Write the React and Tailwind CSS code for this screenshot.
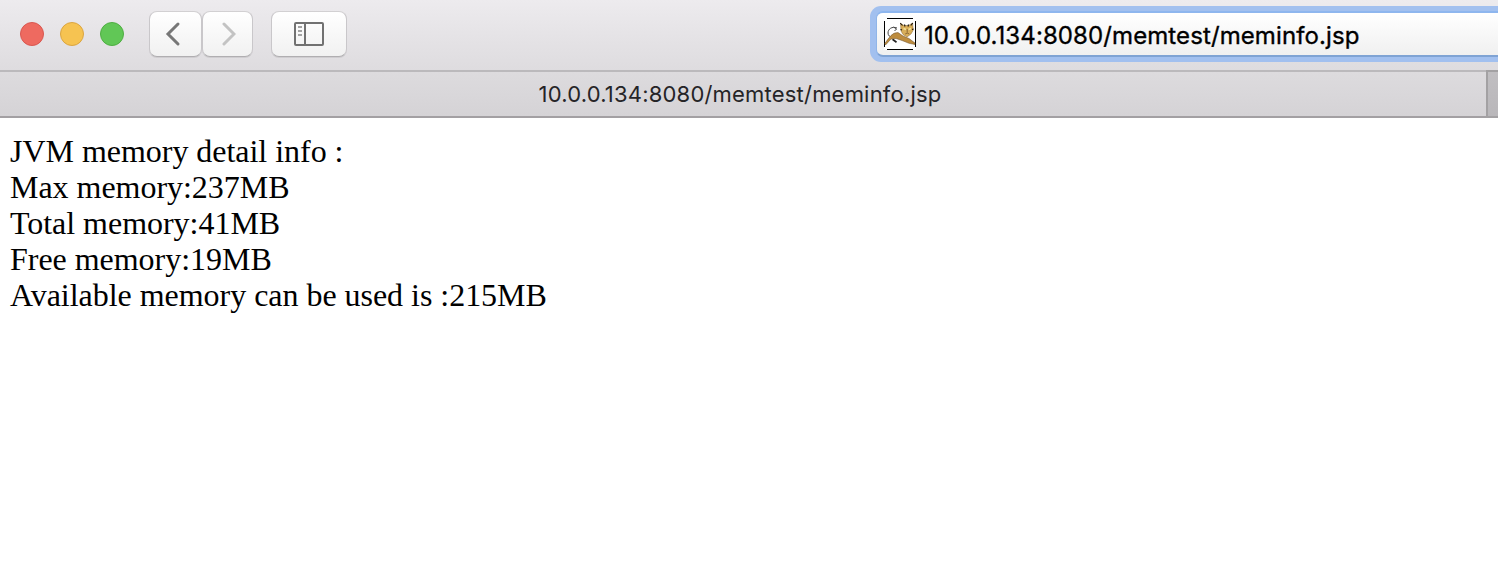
import React from "react";

const lines = [
  "JVM memory detail info :",
  "Max memory:237MB",
  "Total memory:41MB",
  "Free memory:19MB",
  "Available memory can be used is :215MB",
];

const url = "10.0.0.134:8080/memtest/meminfo.jsp";

const buttonClass =
  "flex h-[46px] items-center justify-center rounded-[8px] border border-t-[#d2d0d2] border-x-[#c9c7ca] border-b-[#b0aeb1] bg-linear-to-b from-white to-[#f1f1f1] shadow-[0_1px_0_#cfcdd0]";

function CatIcon() {
  return (
    <svg width="32" height="32" viewBox="0 0 32 32" className="shrink-0" aria-hidden="true">
      <rect width="32" height="32" rx="2" fill="#fff" />
      <path d="M3 .5H29M3 31.5H29M.5 3V29M31.5 3V29" stroke="#000" strokeWidth="1" />
      <path d="M13 10C8 8 4 11 4 15C4 17.5 6 19 8 19.5" fill="none" stroke="#444" strokeWidth="1" />
      <path d="M9.5 9L12.5 11L10.5 13" fill="none" stroke="#444" strokeWidth="1" />
      <path d="M9 20.5L13 23.5L12 25L8 22Z" fill="#222" />
      <path d="M.8 25.5L4 21L7 17.5Q9.5 14.5 14 14.5L19 18L25 20.5L31 25V26.5L25 25.3L18 22.5L12 20.5L7 21L1.5 27Z" fill="#bd8c3e" stroke="#6a4d25" strokeWidth=".5" />
      <path d="M16.5 5.5L20 7.5H24.5L28.5 5L29.3 12L27 16L23 19L19 16.5L17 13Z" fill="#d9ae59" stroke="#8a6937" strokeWidth=".5" />
      <path d="M16.2 5L18.5 7.5M20.5 6.5L21 8.5M24 8.5L24.5 6.5M26.8 7.5L28.8 5M16.5 11.5L18 12M28 11.5L29.5 11" stroke="#17120c" strokeWidth="1.1" />
      <path d="M19.5 10.5L22 11.5M24.5 11.5L27 10.5" stroke="#f3e49a" strokeWidth="1.5" />
      <path d="M23.2 11V14.5M21.2 16L23.2 15L25.2 16" fill="none" stroke="#76542a" strokeWidth=".8" />
    </svg>
  );
}

export default function App() {
  return (
    <div className="flex h-[562px] w-full flex-col overflow-hidden bg-white">
      <header className="flex h-[70px] shrink-0 bg-linear-to-b from-[#edebee] to-[#dedcdf]">
        <div className="flex w-[870px] shrink-0 items-start">
          <div className="ml-5 mt-[22px] flex gap-4">
            <span className="size-6 rounded-full border border-[#d95750] bg-[#ee6a60]" />
            <span className="size-6 rounded-full border border-[#dba541] bg-[#f6c351]" />
            <span className="size-6 rounded-full border border-[#4fae42] bg-[#61c756]" />
          </div>
          <div className="ml-[25px] mt-[11px] flex">
            <button aria-label="Back" className={`${buttonClass} w-[53px] pr-[5px]`}>
              <svg width="16" height="26" viewBox="0 0 16 26" fill="none" stroke="#777" strokeWidth="3" strokeLinecap="round">
                <path d="M13 3L3 13L13 23" />
              </svg>
            </button>
            <button aria-label="Forward" className={`${buttonClass} w-[51px]`}>
              <svg width="16" height="26" viewBox="0 0 16 26" fill="none" stroke="#c3c3c3" strokeWidth="3" strokeLinecap="round">
                <path d="M4 3L14 13L4 23" />
              </svg>
            </button>
          </div>
          <button aria-label="Sidebar" className={`${buttonClass} ml-[18px] mt-[11px] w-[76px]`}>
            <svg width="30" height="24" viewBox="0 0 30 24" fill="none">
              <rect x="1" y="1" width="28" height="22" rx="1" stroke="#717171" strokeWidth="2" />
              <path d="M11 1V23" stroke="#717171" strokeWidth="2" />
              <path d="M4 5H8M4 9H8M4 13H8" stroke="#a2a2a2" strokeWidth="2" />
            </svg>
          </button>
        </div>
        <div className="mt-[6px] h-[56px] flex-1 rounded-l-[11px] bg-[#a2c0ef] pb-[5px] pl-[6px] pt-[5px]">
          <div className="flex h-[46px] items-center overflow-hidden rounded-l-[7px] border-y-2 border-l border-b-[#7fa3d4] border-l-[#90b5e8] border-t-[#8eb6ee] bg-linear-to-b from-white to-[#f0f0f0] pl-[7px]">
            <CatIcon />
            <span className="ml-[8px] mt-[3px] whitespace-nowrap font-['Inter',sans-serif] text-[24px] leading-[30px] tracking-[0.1px] text-black [-webkit-text-stroke:0.35px_#000]">{url}</span>
          </div>
        </div>
      </header>
      <nav className="flex h-[48px] shrink-0">
        <div className="flex w-[1486px] shrink-0 items-center justify-center border-b-2 border-t-2 border-b-[#a3a0a3] border-t-[#bbb9bc] bg-linear-to-b from-[#dddbde] to-[#d5d3d6] pr-[6px]">
          <span className="whitespace-nowrap font-['Inter',sans-serif] text-[22px] leading-[28px] tracking-[0.2px] text-[#252427]">{url}</span>
        </div>
        <div className="flex-1 border-y-2 border-l-2 border-[#a3a1a3] bg-linear-to-b from-[#c0bec1] to-[#b9b7ba]" />
      </nav>
      <main className="px-[10px] pt-[15px] font-['Liberation_Serif',serif] text-[32px] leading-[36px] tracking-[-0.03px] text-black">
        {lines.map((line) => (
          <p key={line} className="whitespace-nowrap">{line}</p>
        ))}
      </main>
    </div>
  );
}
